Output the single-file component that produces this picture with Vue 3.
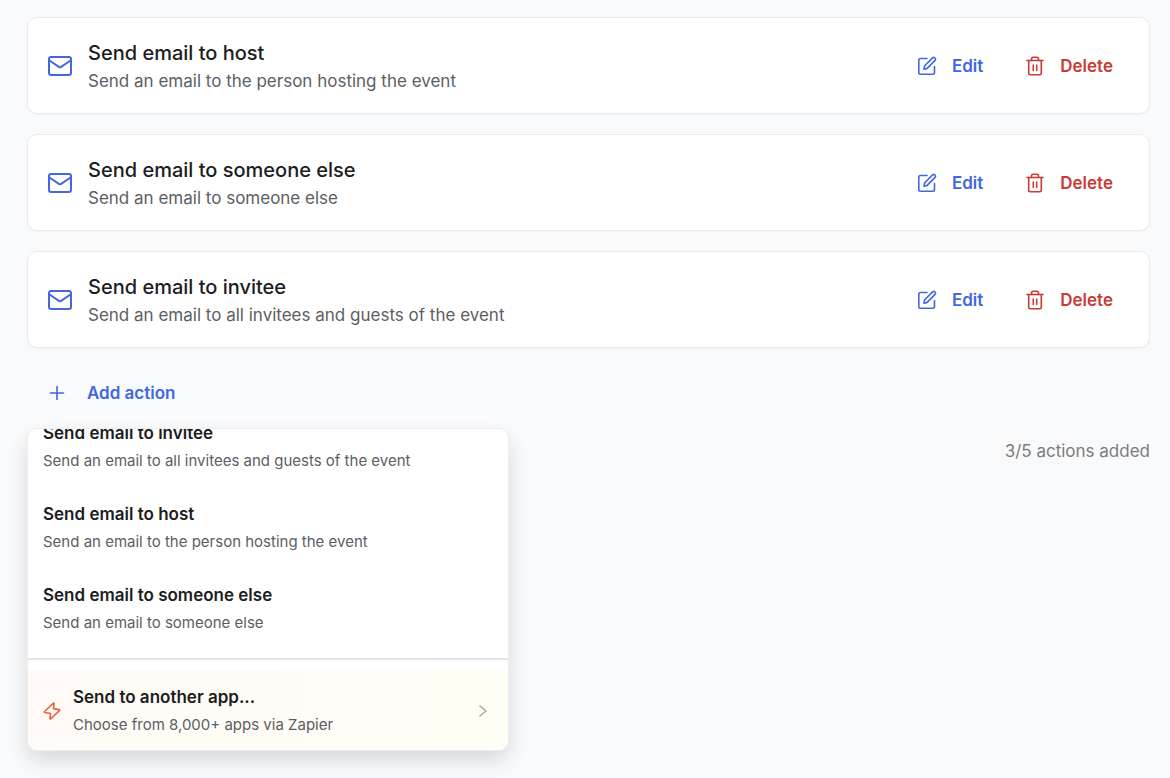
<script setup>
import { ref, onMounted } from 'vue';

const actions = [
  { id: 1, title: 'Send email to host', description: 'Send an email to the person hosting the event' },
  { id: 2, title: 'Send email to someone else', description: 'Send an email to someone else' },
  { id: 3, title: 'Send email to invitee', description: 'Send an email to all invitees and guests of the event' },
];

const options = [actions[2], actions[0], actions[1]];

const maxActions = 5;
const menuOpen = ref(true);
const optionList = ref(null);

const toggleMenu = () => {
  menuOpen.value = !menuOpen.value;
};

onMounted(() => {
  optionList.value.scrollTop = optionList.value.scrollHeight;
});
</script>

<template>
  <main class="workflow">
    <ul class="action-list">
      <li v-for="action in actions" :key="action.id" class="action-card">
        <svg class="mail-icon" viewBox="0 0 24 20" aria-hidden="true">
          <rect x="1" y="1" width="22" height="18" rx="2" />
          <path d="M1.5 4.5 L10.9 10.8 Q12 11.5 13.1 10.8 L22.5 4.5" />
        </svg>
        <div class="action-text">
          <h2 class="action-title">{{ action.title }}</h2>
          <p class="action-description">{{ action.description }}</p>
        </div>
        <div class="action-buttons">
          <button type="button" class="link-button">
            <svg class="button-icon" viewBox="0 0 20 20" aria-hidden="true">
              <path d="M10 2.5H3.5Q1.8 2.5 1.8 4.2V16.5Q1.8 18.2 3.5 18.2H15.8Q17.5 18.2 17.5 16.5V10.5" />
              <path d="M7 13.2L7.7 9.8L15.6 1.9Q16.7 .9 17.9 2Q19.1 3.2 18 4.4L10.2 12.4Z" />
            </svg>
            <span>Edit</span>
          </button>
          <button type="button" class="link-button danger">
            <svg class="button-icon" viewBox="0 0 20 20" aria-hidden="true">
              <path d="M2 4.5H18" />
              <path d="M6.5 4.5V3Q6.5 1.3 8.2 1.3H11.8Q13.5 1.3 13.5 3V4.5" />
              <path d="M3.7 4.5V17Q3.7 18.7 5.4 18.7H14.6Q16.3 18.7 16.3 17V4.5" />
              <path d="M8.3 9V14.5M11.7 9V14.5" />
            </svg>
            <span>Delete</span>
          </button>
        </div>
      </li>
    </ul>

    <button type="button" class="add-button" @click="toggleMenu">
      <svg class="plus-icon" viewBox="0 0 16 16" aria-hidden="true">
        <path d="M8 1.5V14.5M1.5 8H14.5" />
      </svg>
      <span>Add action</span>
    </button>

    <div class="menu-row">
      <div v-show="menuOpen" class="menu">
        <div ref="optionList" class="option-list">
          <button v-for="option in options" :key="option.id" type="button" class="option">
            <span class="option-title">{{ option.title }}</span>
            <span class="option-description">{{ option.description }}</span>
          </button>
        </div>
        <div class="menu-footer">
          <button type="button" class="zapier">
            <svg class="bolt-icon" viewBox="0 0 18 18" aria-hidden="true">
              <path d="M10.2 1.4L1.6 9.5Q1 10.2 1.9 10.5L7.6 11.5L6.9 16.6Q7.1 17.4 7.9 16.7L16.4 8.6Q17 7.9 16.1 7.6L10.4 6.6L11.1 1.6Q10.9 .8 10.2 1.4Z" />
            </svg>
            <span class="zapier-text">
              <span class="option-title">Send to another app...</span>
              <span class="option-description">Choose from 8,000+ apps via Zapier</span>
            </span>
            <svg class="chevron-icon" viewBox="0 0 12 12" aria-hidden="true">
              <path d="M3 1L9 6L3 11" />
            </svg>
          </button>
        </div>
      </div>
      <p class="count">{{ actions.length }}/{{ maxActions }} actions added</p>
    </div>
  </main>
</template>

<style>
body {
  margin: 0;
  background-color: #f9fafc;
}
</style>

<style scoped>
.workflow {
  padding: 17px 20px 27px 27px;
  font-family: Inter, 'Liberation Sans', sans-serif;
  color: #1c1d21;
}

button {
  font-family: inherit;
  border: none;
  background: none;
  cursor: pointer;
}

svg {
  flex: none;
  fill: none;
  stroke: currentColor;
  stroke-width: 1.6;
  stroke-linecap: round;
  stroke-linejoin: round;
}

.action-list {
  display: flex;
  flex-direction: column;
  gap: 20px;
  margin: 0;
  padding: 0;
  list-style: none;
}

.action-card {
  display: flex;
  align-items: center;
  padding: 18px 36px 18px 20px;
  background-color: #ffffff;
  border: 1px solid #e9ebef;
  border-radius: 10px;
  box-shadow: 0 1px 2px rgba(0, 0, 0, 0.04);
}

.mail-icon {
  width: 24px;
  height: 20px;
  margin-right: 16px;
  color: #4267e0;
  stroke-width: 2;
}

.action-text {
  flex: 1;
  padding-top: 3px;
}

.action-title {
  margin: 0;
  font-size: 20px;
  line-height: 28px;
  font-weight: 500;
}

.action-description {
  margin: 0;
  font-size: 17px;
  line-height: 28px;
  color: #5d5e62;
}

.action-buttons {
  display: flex;
  gap: 42px;
}

.link-button,
.add-button {
  display: flex;
  align-items: center;
  gap: 15px;
  padding: 0;
  font-size: 17px;
  line-height: 24px;
  font-weight: 600;
  color: #4267e0;
}

.danger {
  color: #c93b36;
}

.button-icon {
  width: 20px;
  height: 20px;
}

.add-button {
  gap: 22px;
  margin: 33px 0 23px 22px;
}

.plus-icon {
  width: 16px;
  height: 16px;
}

.menu-row {
  display: flex;
  align-items: flex-start;
  justify-content: space-between;
}

.menu {
  box-sizing: border-box;
  width: 482px;
  overflow: hidden;
  background-color: #ffffff;
  border: 1px solid #eceef1;
  border-radius: 10px;
  box-shadow: 0 10px 20px rgba(0, 0, 0, 0.13);
}

.option-list {
  max-height: 229px;
  padding: 10px 0;
  box-sizing: border-box;
  overflow-y: auto;
  scrollbar-width: none;
}

.option {
  display: block;
  width: 100%;
  padding: 14px 15px 11px;
  text-align: left;
}

.option-title,
.option-description {
  display: block;
}

.option-title {
  font-size: 17px;
  line-height: 28px;
  font-weight: 600;
  color: #1c1d21;
}

.option-description {
  font-size: 15px;
  line-height: 28px;
  color: #5d5e62;
}

.menu-footer {
  padding-top: 10px;
  border-top: 2px solid #e3e4e6;
}

.zapier {
  display: flex;
  align-items: center;
  width: 100%;
  padding: 13px 19px 11px 15px;
  text-align: left;
  background: linear-gradient(to right, #fffaf5, #fffef5);
}

.zapier-text {
  flex: 1;
  margin-left: 12px;
}

.bolt-icon {
  width: 18px;
  height: 18px;
  color: #e5683c;
}

.chevron-icon {
  width: 12px;
  height: 12px;
  color: #aaa9a5;
}

.count {
  margin: 11px 0 0;
  font-size: 17px;
  line-height: 24px;
  color: #7b7c7f;
}
</style>
